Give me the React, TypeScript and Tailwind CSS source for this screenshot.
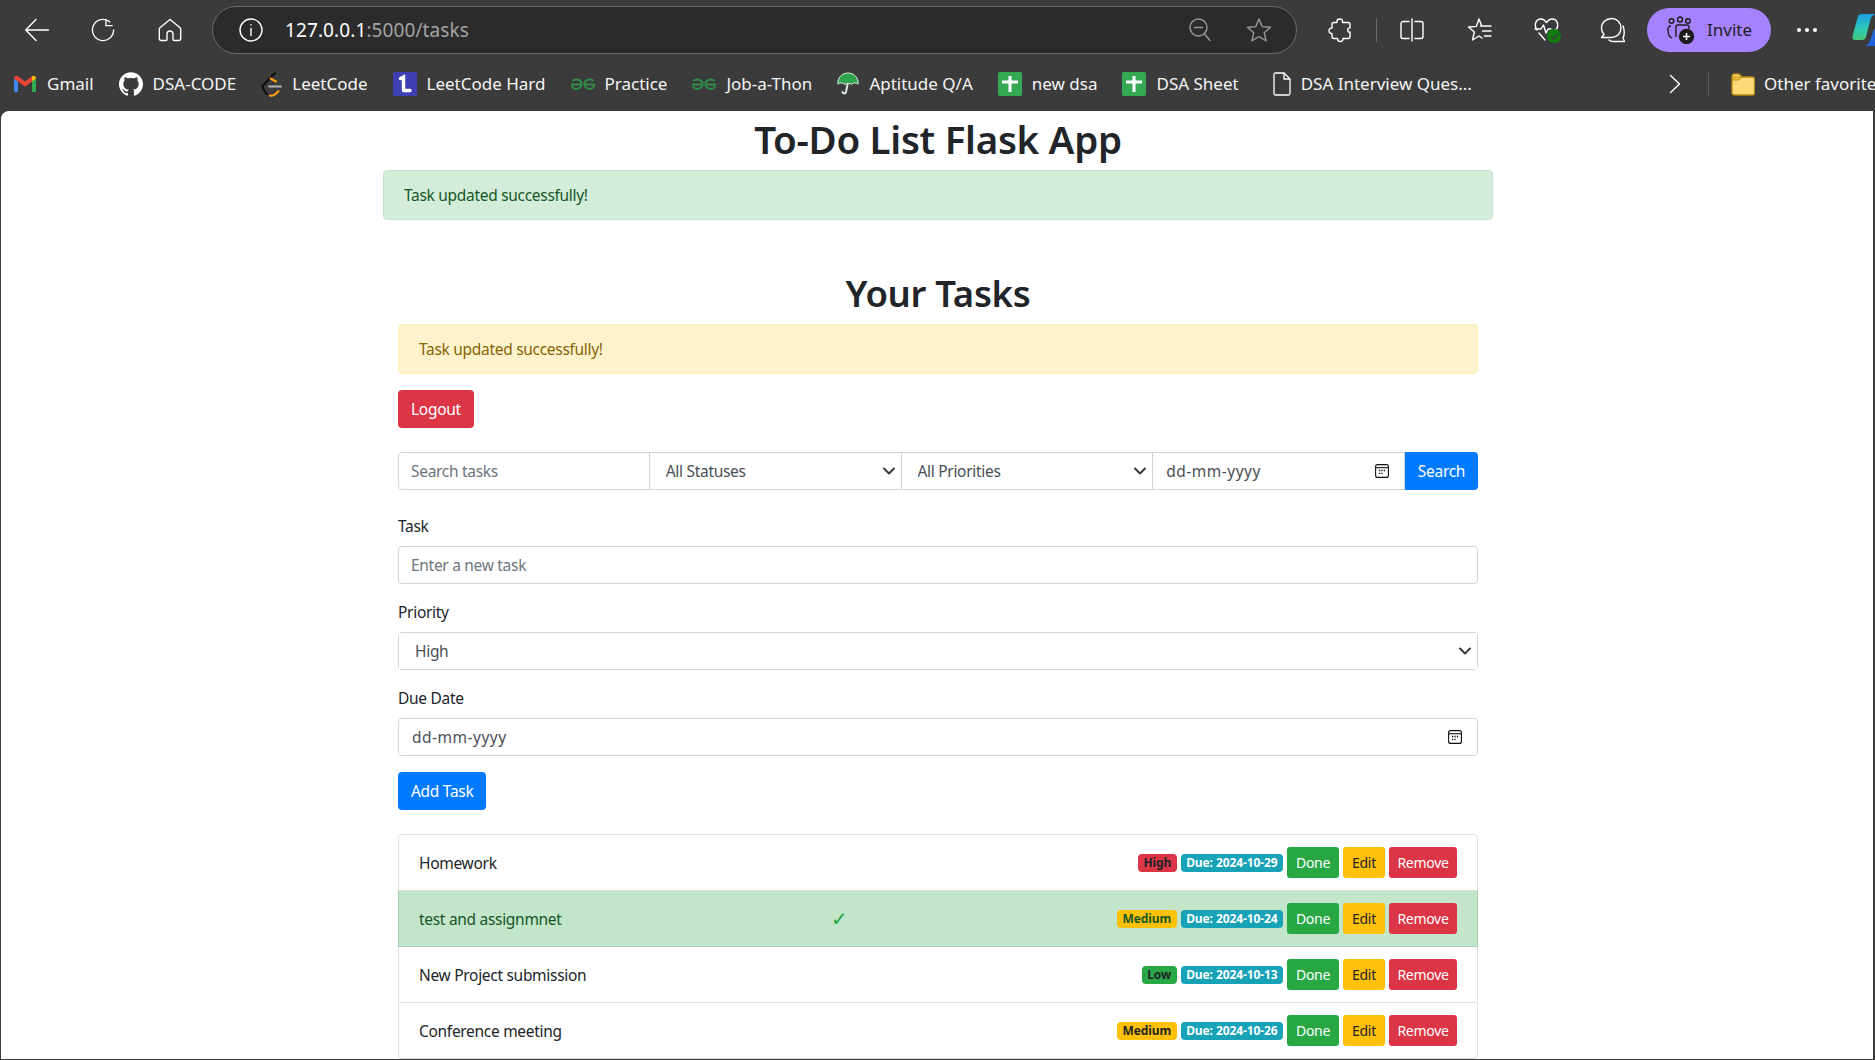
import { ReactNode } from 'react'
import { SiGithub } from 'react-icons/si'
import { ChevronDown } from 'lucide-react'

type Bookmark = { label: string; icon: ReactNode; gap?: string }

const GmailIcon = () => (
  <svg width="24" height="18" viewBox="0 0 24 18" fill="none">
    <path d="M1 17V3.5L5 6.5V17H2a1 1 0 0 1-1-1z" fill="#4285f4" />
    <path d="M19 17V6.5l4-3V16a1 1 0 0 1-1 1z" fill="#34a853" />
    <path d="M1 3.5C1 1 3.5 0 5 1.2L12 6.5l7-5.3V6.5L12 11.7 1 3.5z" fill="#ea4335" />
    <path d="M19 1.2C20.5 0 23 1 23 3.5L19 6.5z" fill="#fbbc04" />
  </svg>
)

const LeetCodeIcon = () => (
  <svg width="21" height="25" viewBox="0 0 21 25" fill="none" strokeLinecap="round">
    <path d="M14 1 L1.5 14 C1.5 16 3 19 6 22" stroke="#0d0d0d" strokeWidth="2" />
    <path d="M9.5 6.5 L15 9.5" stroke="#ffa116" strokeWidth="2" />
    <path d="M9 23.5 C12 24.5 15 22 17.5 19" stroke="#ffa116" strokeWidth="2" />
    <path d="M8 14.5 H20" stroke="#b3b3b3" strokeWidth="2" />
  </svg>
)

const LeetHardIcon = () => (
  <svg width="24" height="24" viewBox="0 0 24 24" fill="none">
    <rect width="24" height="24" rx="2" fill="#3f3fb4" />
    <path d="M7.5 6.5 L10.5 5 V17.5 M10.5 18.5 H17" stroke="#fff" strokeWidth="3.4" strokeLinecap="round" />
  </svg>
)

const GfgIcon = () => (
  <svg width="24" height="12" viewBox="0 0 24 12" fill="none" stroke="#2f8d46" strokeWidth="2">
    <path d="M1.5 3 C3 1 9 0.5 10.5 5 C11.5 9 7.5 11 5 11 C3 11 1.2 9.5 1 6.5 H11.5" />
    <path d="M22.5 3 C21 1 15 0.5 13.5 5 C12.5 9 16.5 11 19 11 C21 11 22.8 9.5 23 6.5 H12.5" />
  </svg>
)

const UmbrellaIcon = () => (
  <svg width="22" height="24" viewBox="0 0 22 24" fill="none">
    <path d="M11 10 L9 20 C8.5 22 6 22 5.5 20" stroke="#dfeadf" strokeWidth="2" strokeLinecap="round" />
    <path d="M1 12 C0 6 5 1 11 1 C17 1 22 6 21 12 C19 10.5 16 10.5 14.5 12.5 C13 11 9.5 11 8 12.5 C6 10.5 3 10.5 1 12z" fill="#2fa550" stroke="#dfeadf" strokeWidth="1" />
  </svg>
)

const SheetIcon = () => (
  <svg width="24" height="24" viewBox="0 0 24 24" fill="none">
    <rect width="24" height="24" rx="2" fill="#34a853" />
    <path d="M4 10 H20 M12 4 V20" stroke="#fff" strokeWidth="3" />
  </svg>
)

const DocIcon = () => (
  <svg width="18" height="24" viewBox="0 0 18 24" fill="none" stroke="#fff" strokeWidth="1.3">
    <path d="M2.5 1 H11 L17 7 V21.5 C17 22.4 16.4 23 15.5 23 H2.5 C1.6 23 1 22.4 1 21.5 V2.5 C1 1.6 1.6 1 2.5 1z" />
    <path d="M11 1 V7 H17" />
  </svg>
)

const FolderIcon = () => (
  <svg width="24" height="23" viewBox="0 0 24 23" fill="none">
    <path d="M1 3.5 C1 2 2 1 3.5 1 H8 L11 4 H21.5 C22.5 4 23.5 5 23.5 6 V20 C23.5 21 22.5 22 21.5 22 H3 C2 22 1 21 1 20z" fill="#ffd978" stroke="#b98a12" strokeWidth="1.3" />
    <path d="M1 7 L2 4 H8.5 L10.5 4.5 L8 7z" fill="#f5c242" stroke="#b98a12" strokeWidth="1" />
  </svg>
)

const CalendarIcon = () => (
  <svg width="14" height="14" viewBox="0 0 14 14" fill="none">
    <rect x="0.6" y="0.6" width="12.8" height="12.8" rx="2" stroke="#111" strokeWidth="1.1" />
    <path d="M1 3.7 H13" stroke="#111" strokeWidth="1.1" />
    <path d="M4 6.5 H5.3 M6.4 6.5 H7.7 M8.8 6.5 H10.1 M4 9.3 H5.3 M6.4 9.3 H7.7" stroke="#111" strokeWidth="1.3" />
  </svg>
)

const iconStroke = {
  fill: 'none',
  stroke: '#fff',
  strokeWidth: 1.4,
  strokeLinecap: 'round',
  strokeLinejoin: 'round',
} as const

const bookmarks: Bookmark[] = [
  { label: 'Gmail', icon: <GmailIcon /> },
  { label: 'DSA-CODE', icon: <SiGithub size={24} color="#fff" /> },
  { label: 'LeetCode', icon: <LeetCodeIcon /> },
  { label: 'LeetCode Hard', icon: <LeetHardIcon /> },
  { label: 'Practice', icon: <GfgIcon /> },
  { label: 'Job-a-Thon', icon: <GfgIcon /> },
  { label: 'Aptitude Q/A', icon: <UmbrellaIcon /> },
  { label: 'new dsa', icon: <SheetIcon /> },
  { label: 'DSA Sheet', icon: <SheetIcon /> },
  { label: 'DSA Interview Ques...', icon: <DocIcon />, gap: 'ml-[9px]' },
]

const tasks = [
  { name: 'Homework', priority: 'High', color: 'bg-[#dc3545]', due: '2024-10-29' },
  { name: 'test and assignmnet', priority: 'Medium', color: 'bg-[#ffc107]', due: '2024-10-24', done: true },
  { name: 'New Project submission', priority: 'Low', color: 'bg-[#28a745]', due: '2024-10-13' },
  { name: 'Conference meeting', priority: 'Medium', color: 'bg-[#ffc107]', due: '2024-10-26' },
]

const Toolbar = () => (
  <div className="-mr-[2px] flex h-[60px] shrink-0 items-center overflow-hidden pl-[24px] *:shrink-0">
    <svg width="24" height="24" viewBox="0 0 24 24" {...iconStroke}>
      <path d="M23.5 12 H1 M11 1.5 L0.8 12 L11 22.5" />
    </svg>
    <svg className="ml-[42px]" width="24" height="24" viewBox="0 0 24 24" {...iconStroke}>
      <path d="M19 3.5 A11 11 0 1 0 23 12 M15 1 V7.5 H21.5" transform="translate(0.5 0.5) scale(0.96)" />
    </svg>
    <svg className="ml-[43px]" width="24" height="24" viewBox="0 0 24 24" {...iconStroke}>
      <path d="M12 1.5 L21.8 9.5 C22.4 10 22.7 10.6 22.7 11.4 V20.5 C22.7 21.6 21.8 22.5 20.7 22.5 H16 C15.4 22.5 15 22 15 21.5 V16 C15 14.3 13.7 13 12 13 C10.3 13 9 14.3 9 16 V21.5 C9 22 8.6 22.5 8 22.5 H3.3 C2.2 22.5 1.3 21.6 1.3 20.5 V11.4 C1.3 10.6 1.6 10 2.2 9.5z" />
    </svg>
    <div className="ml-[30px] flex h-[48px] w-[1085px] items-center rounded-full border border-[#6b6b6b] bg-[#2b2b2b] pl-[26px]">
      <svg width="24" height="24" viewBox="0 0 24 24" {...iconStroke}>
        <circle cx="12" cy="12" r="11" />
        <path d="M12 10.5 V17.5 M12 6.6 V7" />
      </svg>
      <span className="ml-[22px] text-[19px] tracking-[0.1px] text-white">
        127.0.0.1<span className="text-[#a3a3a3]">:5000/tasks</span>
      </span>
      <svg className="ml-auto" width="22" height="24" viewBox="0 0 22 24" fill="none" stroke="#9a9a9a" strokeWidth="1.4" strokeLinecap="round">
        <circle cx="9.5" cy="9.5" r="8.5" />
        <path d="M5.5 9.5 H13.5 M15.5 16 L21 22.5" />
      </svg>
      <svg className="ml-[35px] mr-[24px]" width="26" height="26" viewBox="0 0 26 26" fill="none" stroke="#9a9a9a" strokeWidth="1.4" strokeLinejoin="round">
        <path d="M13 2 L16.2 9.6 L24.5 10.3 L18.2 15.7 L20.1 23.8 L13 19.5 L5.9 23.8 L7.8 15.7 L1.5 10.3 L9.8 9.6z" />
      </svg>
    </div>
    <svg className="ml-[31px]" width="24" height="26" viewBox="0 0 24 26" {...iconStroke}>
      <path d="M9 4 C9 1.5 14.5 1 14.5 4 V5.5 H20 C21 5.5 22 6.5 22 7.5 V11 C19 10 19 16 22 15 V19.5 C22 20.5 21 21.5 20 21.5 H15 C15.5 25.5 9.5 25.5 9.5 21.5 H6 C5 21.5 4 20.5 4 19.5 V16.5 C0 17 0 10.5 4 11 V7.5 C4 6.5 5 5.5 6 5.5 H9z" />
    </svg>
    <div className="ml-[24px] h-[24px] w-px bg-[#6b6b6b]" />
    <svg className="ml-[23px]" width="24" height="24" viewBox="0 0 24 24" {...iconStroke}>
      <path d="M9 3.5 H3 C2 3.5 1 4.5 1 5.5 V18.5 C1 19.5 2 20.5 3 20.5 H9 M15 3.5 H21 C22 3.5 23 4.5 23 5.5 V18.5 C23 19.5 22 20.5 21 20.5 H15 M12 1 V23" />
    </svg>
    <svg className="ml-[43px]" width="26" height="26" viewBox="0 0 26 26" {...iconStroke}>
      <path d="M12 2 L14.8 9 L13.5 9 M12 2 L9.3 9.4 L1.5 10 L7.3 15 L5.5 23 L12 19 L15 21 M14.8 9 H24 M15.5 14 H24 M17.5 19 H24" />
    </svg>
    <div className="relative ml-[41px] h-[26px] w-[27px]">
      <svg width="25" height="24" viewBox="0 0 25 24" {...iconStroke}>
        <path d="M3 13 C0 9 1 2 7 2 C10 2 11.5 4 12.5 5.5 C13.5 4 15 2 18 2 C24 2 25 9 22 13 M1 12 H7 L9.5 8 L12 16 L14 12 H17 M5 16 L11 23" />
      </svg>
      <span className="absolute bottom-0 right-0 flex size-[14px] items-center justify-center rounded-full bg-[#107c10]">
        <svg width="9" height="7" viewBox="0 0 9 7" fill="none" stroke="#3b3b3b" strokeWidth="1.5">
          <path d="M1 3.5 L3.5 6 L8 1" />
        </svg>
      </span>
    </div>
    <svg className="ml-[39px]" width="26" height="26" viewBox="0 0 26 26" {...iconStroke}>
      <path d="M11.5 1.5 C17 1.5 21 5.5 21 11 C21 16.5 17 20.5 11.5 20.5 H1.5 L4 17.5 C2.5 16 1.5 13.5 1.5 11 C1.5 5.5 6 1.5 11.5 1.5z" />
      <path d="M23 9 C24.5 13 24.5 18 23 21 L24.5 24.5 H13 C11.5 24.5 10 24 9 23" />
    </svg>
    <div className="ml-[21px] flex h-[44px] w-[124px] items-center rounded-full bg-[#a682ff] pl-[20px]">
      <svg width="28" height="28" viewBox="0 0 28 28" fill="none" stroke="#1c1c1c" strokeWidth="1.4">
        <circle cx="4.5" cy="5" r="2.3" />
        <circle cx="13" cy="3.5" r="2.5" />
        <circle cx="21" cy="5" r="2.3" />
        <path d="M4 10 C1 10 1 12 1 14 C1 18 2 21 5 22 M9 21 V11 C9 9.5 10 9 11 9 H20 C21.5 9 22 10 22 11 V13" />
        <circle cx="19.5" cy="20.5" r="7" fill="#1c1c1c" />
        <path d="M19.5 17 V24 M16 20.5 H23" stroke="#fff" strokeWidth="1.6" />
      </svg>
      <span className="ml-[12px] text-[17px] text-[#1f1f1f]">Invite</span>
    </div>
    <div className="ml-[26px] flex gap-[4px]">
      <span className="size-[4px] rounded-full bg-white" />
      <span className="size-[4px] rounded-full bg-white" />
      <span className="size-[4px] rounded-full bg-white" />
    </div>
    <svg className="ml-[35px]" width="34" height="34" viewBox="0 0 34 34" fill="none">
      <defs>
        <linearGradient id="copilotLeft" x1="0" y1="0" x2="0" y2="1">
          <stop offset="0" stopColor="#1b9de2" />
          <stop offset="0.55" stopColor="#2cc8b8" />
          <stop offset="1" stopColor="#46c878" />
        </linearGradient>
        <linearGradient id="copilotRight" x1="0" y1="0" x2="1" y2="1">
          <stop offset="0" stopColor="#2a7de1" />
          <stop offset="1" stopColor="#1a4fd8" />
        </linearGradient>
      </defs>
      <path d="M6 3 C7 1 9 1 14 1 H24 C20 2 18.5 5 18 8 L14 24 C13.5 26 12 27 10 27 H3 C1 27 0 25.5 0.6 23z" fill="url(#copilotLeft)" />
      <path d="M12 33 L24 33 C27 33 29 31 30 28 L34 12 L22 16 L18 28 C17.5 30 15 33 12 33z" fill="url(#copilotRight)" />
    </svg>
  </div>
)

const BookmarksBar = () => (
  <div className="-mr-[2px] flex h-[51px] shrink-0 items-center overflow-hidden pb-[3px] pl-[12px] text-[17px] text-[#f5f5f5]">
    <div className="flex shrink-0 items-center gap-[25px]">
      {bookmarks.map((b) => (
        <div key={b.label} className={`flex items-center gap-[10px] ${b.gap ?? ''}`}>
          {b.icon}
          <span className="whitespace-nowrap">{b.label}</span>
        </div>
      ))}
    </div>
    <div className="flex-1" />
    <div className="flex w-[206px] shrink-0 items-center overflow-hidden">
      <svg className="shrink-0" width="12" height="20" viewBox="0 0 12 20" {...iconStroke}>
        <path d="M1.5 1.5 L10.5 10 L1.5 18.5" />
      </svg>
      <div className="ml-[27px] h-[24px] w-px shrink-0 bg-[#5d5d5d]" />
      <div className="ml-[22px] shrink-0">
        <FolderIcon />
      </div>
      <span className="ml-[9px] whitespace-nowrap">Other favorites</span>
    </div>
  </div>
)

const SelectBox = ({ label, className }: { label: string; className: string }) => (
  <div className={`relative ${className}`}>
    <select className="h-full w-full appearance-none bg-white pl-[16px] text-[#495057] outline-none">
      <option>{label}</option>
    </select>
    <ChevronDown className="pointer-events-none absolute right-[2px] top-1/2 -translate-y-1/2 text-[#343a40]" size={20} strokeWidth={2.4} />
  </div>
)

const DateBox = ({ className }: { className: string }) => (
  <div className={`relative ${className}`}>
    <input
      readOnly
      placeholder="dd-mm-yyyy"
      className="h-full w-full min-w-0 rounded-[4px] bg-white pl-[13px] tracking-[0.5px] outline-none placeholder:text-[#495057]"
    />
    <div className="pointer-events-none absolute right-[15px] top-1/2 -translate-y-1/2">
      <CalendarIcon />
    </div>
  </div>
)

const TaskRow = ({ task, index }: { task: (typeof tasks)[number]; index: number }) => (
  <li
    className={`flex items-center justify-between border px-5 py-3 ${index > 0 ? '-mt-px' : 'rounded-t-[4px]'} ${
      task.done ? 'z-10 border-[#a9cfb3] border-t-[#dfdfdf] bg-[#c3e6cb] text-[#155724]' : 'border-[#dfdfdf] bg-white'
    } ${index === tasks.length - 1 ? 'rounded-b-[4px]' : ''}`}
  >
    <span>{task.name}</span>
    {task.done && <span className="text-[20px] font-light text-[#28a745]">✓</span>}
    <div className="flex items-center gap-[4px]">
      <span className={`rounded-[4px] px-[5.5px] text-[12px] leading-[18px] font-bold tracking-[-0.1px] ${task.color} ${task.done ? 'text-[#155724]' : 'text-[#212529]'}`}>
        {task.priority}
      </span>
      <span className="rounded-[4px] bg-[#17a2b8] px-[5.5px] text-[12px] leading-[18px] font-bold tracking-[-0.1px] text-white">
        Due: {task.due}
      </span>
      <button className="h-[31px] w-[52px] rounded-[3px] bg-[#28a745] text-[14px] text-white">Done</button>
      <button className="h-[31px] w-[42px] rounded-[3px] bg-[#ffc107] text-[14px] text-[#212529]">Edit</button>
      <button className="h-[31px] w-[68px] rounded-[3px] bg-[#dc3545] text-[14px] text-white">Remove</button>
    </div>
  </li>
)

export default function App() {
  return (
    <div className="flex h-screen flex-col overflow-hidden bg-[#3b3b3b] pr-[2px] pb-px pl-px font-['Noto_Sans','Open_Sans',sans-serif]">
      <Toolbar />
      <BookmarksBar />
      <main className="min-h-0 flex-1 overflow-hidden rounded-tl-[8px] bg-white text-[15.5px] leading-[24px] tracking-[-0.3px] text-[#212529]">
        <div className="ml-[367px] w-[1140px] px-[15px] pt-[4px]">
          <h1 className="mb-[7px] text-center text-[38.5px] leading-[48px] font-semibold">To-Do List Flask App</h1>
          <div className="rounded-[4px] border border-[#c3e6cb] bg-[#d4edda] px-5 py-3 text-[#155724]">Task updated successfully!</div>

          <div className="mt-12 px-[15px]">
            <h2 className="mb-[7px] pt-px text-center text-[36.5px] leading-[48px] font-semibold">Your Tasks</h2>
            <div className="mb-4 rounded-[4px] border border-[#ffeeba] bg-[#fff3cd] px-5 py-3 text-[#856404]">Task updated successfully!</div>
            <button className="mb-6 block h-[38px] rounded-[4px] bg-[#dc3545] px-[13px] text-white">Logout</button>

            <form className="mb-6 grid h-[38px] grid-cols-[repeat(4,minmax(0,1fr))_73px]">
              <input
                placeholder="Search tasks"
                className="h-full min-w-0 rounded-l-[4px] border border-[#ced4da] bg-white px-3 outline-none placeholder:text-[#6c757d]"
              />
              <SelectBox label="All Statuses" className="-ml-px border border-[#ced4da]" />
              <SelectBox label="All Priorities" className="-ml-px border border-[#ced4da]" />
              <DateBox className="-ml-px border border-[#ced4da]" />
              <button className="rounded-r-[4px] bg-[#007bff] text-white">Search</button>
            </form>

            <label className="mb-2 block">Task</label>
            <input
              placeholder="Enter a new task"
              className="mb-4 block h-[38px] w-full rounded-[4px] border border-[#ced4da] bg-white px-3 outline-none placeholder:text-[#6c757d]"
            />
            <label className="mb-2 block">Priority</label>
            <SelectBox label="High" className="mb-4 h-[38px] rounded-[4px] border border-[#ced4da]" />
            <label className="mb-2 block">Due Date</label>
            <DateBox className="mb-4 h-[38px] rounded-[4px] border border-[#ced4da]" />
            <button className="mb-6 block h-[38px] rounded-[4px] bg-[#007bff] px-[13px] text-white">Add Task</button>

            <ul className="flex flex-col">
              {tasks.map((task, i) => (
                <TaskRow key={task.name} task={task} index={i} />
              ))}
            </ul>
          </div>
        </div>
      </main>
    </div>
  )
}
